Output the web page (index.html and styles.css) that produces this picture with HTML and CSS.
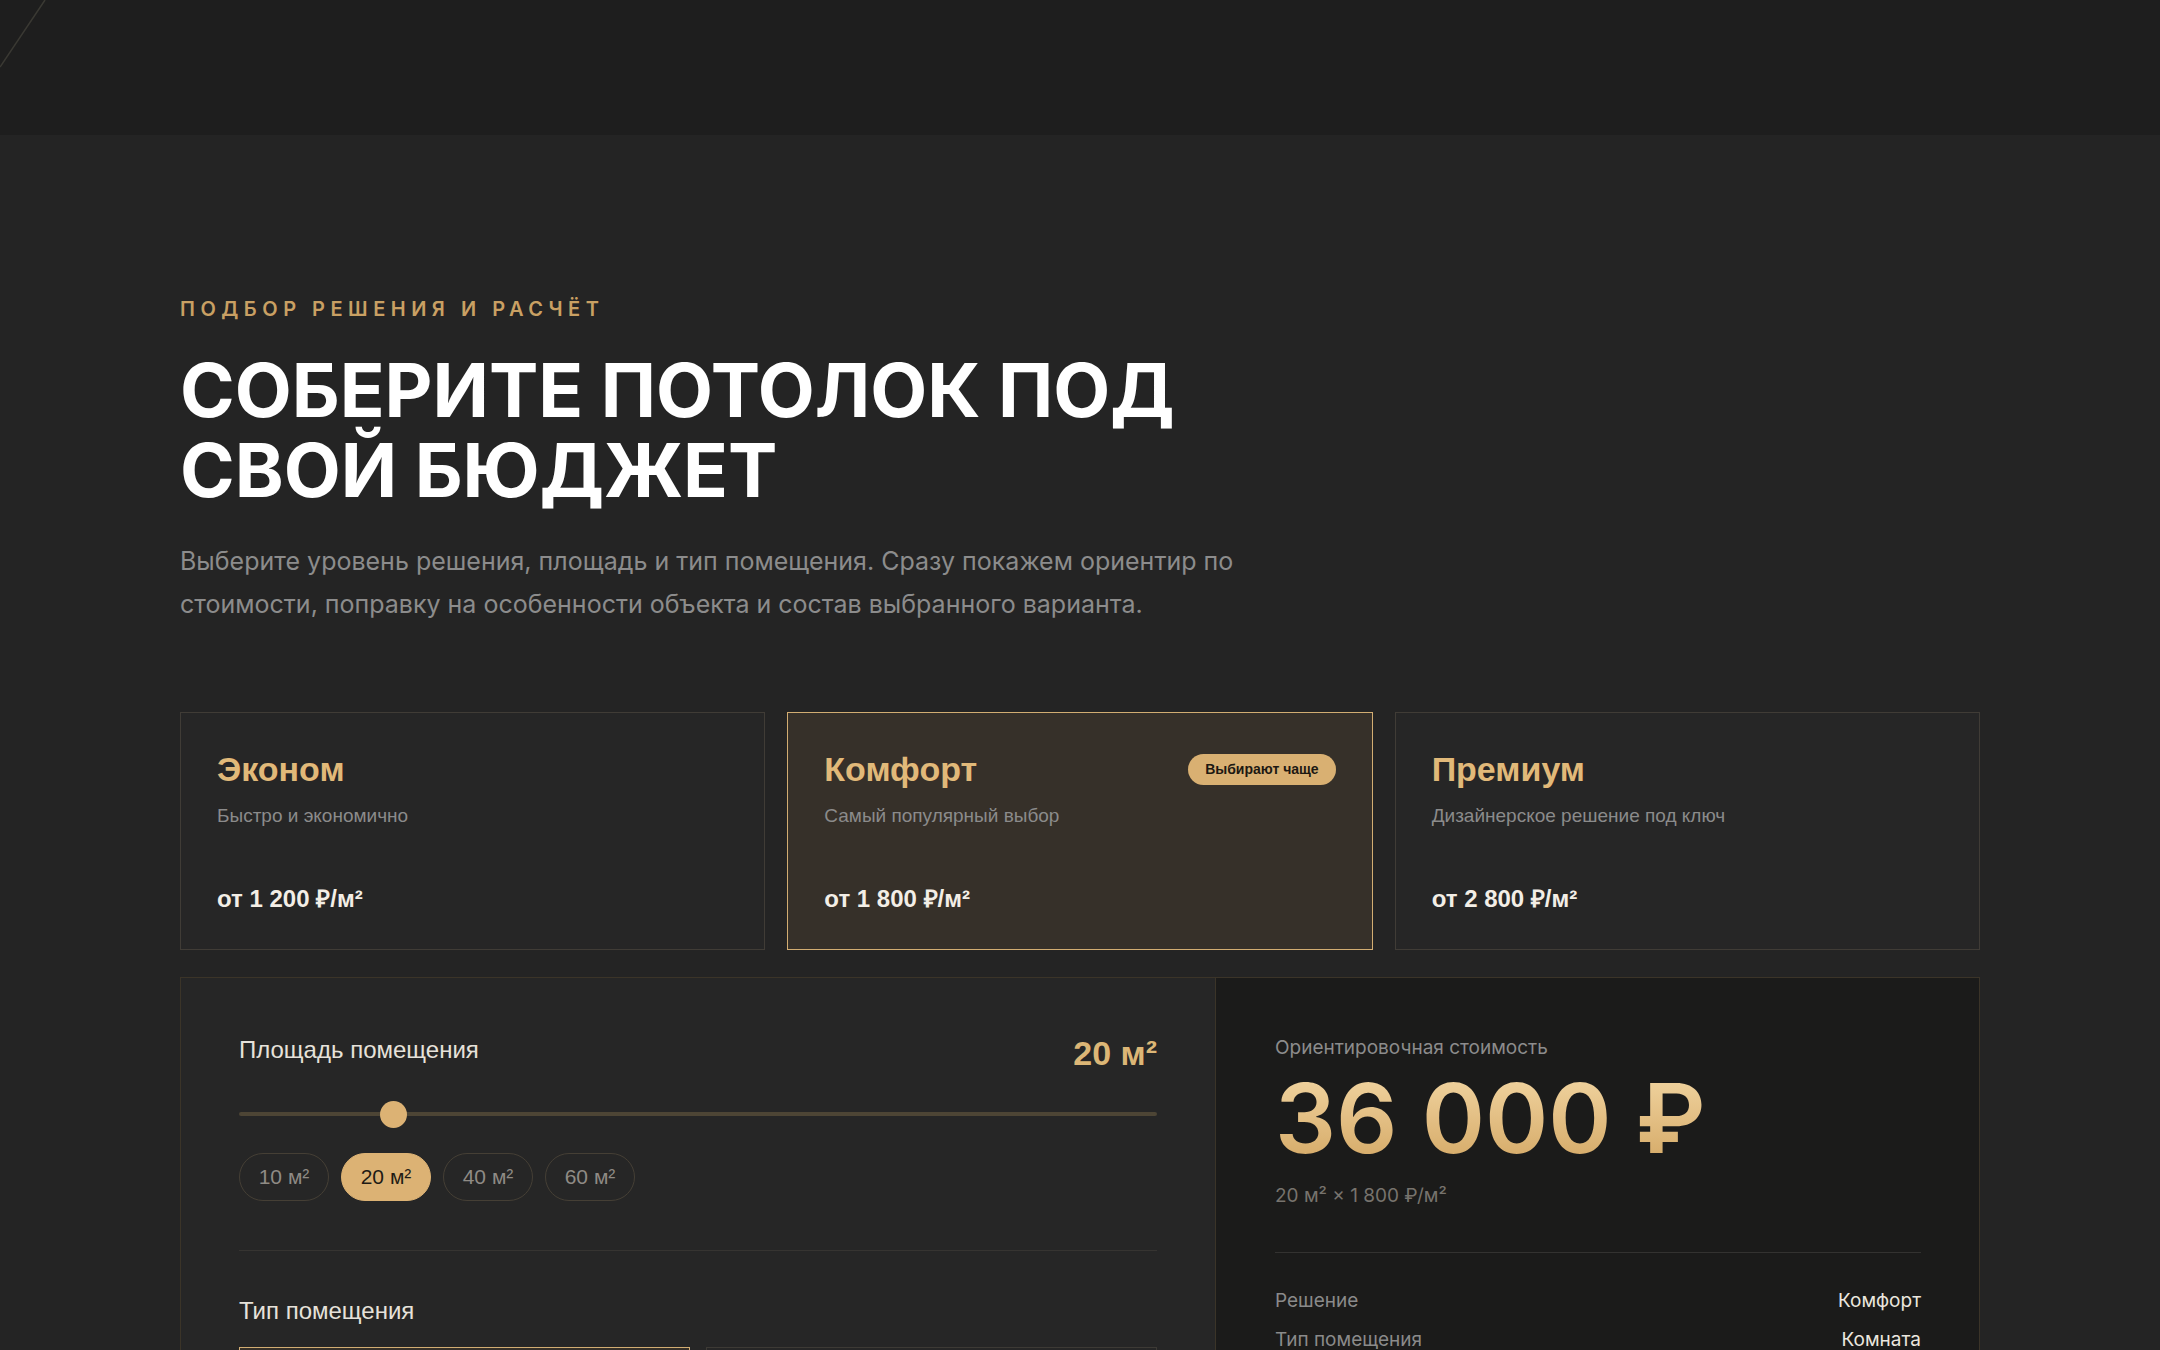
FILE: index.html
```html
<!DOCTYPE html>
<html lang="ru">
<head>
<meta charset="utf-8">
<title>Подбор решения и расчёт</title>
<link rel="stylesheet" href="styles.css">
</head>
<body>
<header class="topbar">
  <svg class="topbar-deco" width="60" height="80" viewBox="0 0 60 80"><line x1="45" y1="0" x2="0" y2="67" stroke="#3a3933" stroke-width="1.5"/></svg>
</header>
<main class="section">
  <p class="eyebrow">Подбор решения и расчёт</p>
  <h1 class="title">Соберите потолок под свой бюджет</h1>
  <p class="lead">Выберите уровень решения, площадь и тип помещения. Сразу покажем ориентир по стоимости, поправку на особенности объекта и состав выбранного варианта.</p>

  <div class="tiers">
    <button class="tier" type="button">
      <span class="tier-head"><span class="tier-name">Эконом</span></span>
      <span class="tier-desc">Быстро и экономично</span>
      <span class="tier-price">от 1 200 ₽/м²</span>
    </button>
    <button class="tier tier-active" type="button">
      <span class="tier-head"><span class="tier-name">Комфорт</span><span class="badge">Выбирают чаще</span></span>
      <span class="tier-desc">Самый популярный выбор</span>
      <span class="tier-price">от 1 800 ₽/м²</span>
    </button>
    <button class="tier" type="button">
      <span class="tier-head"><span class="tier-name">Премиум</span></span>
      <span class="tier-desc">Дизайнерское решение под ключ</span>
      <span class="tier-price">от 2 800 ₽/м²</span>
    </button>
  </div>

  <div class="calc">
    <div class="calc-form">
      <div class="area">
        <div class="area-head">
          <span class="field-label">Площадь помещения</span>
          <span class="area-value">20 м²</span>
        </div>
        <input class="range" type="range" min="5" max="100" value="20" aria-label="Площадь">
        <div class="chips">
          <button class="chip" type="button">10 м²</button>
          <button class="chip chip-active" type="button">20 м²</button>
          <button class="chip" type="button">40 м²</button>
          <button class="chip" type="button">60 м²</button>
        </div>
      </div>
      <div class="rooms">
        <span class="field-label">Тип помещения</span>
        <div class="room-grid">
          <button class="room room-active" type="button">Комната</button>
          <button class="room" type="button">Кухня</button>
          <button class="room" type="button">Санузел</button>
          <button class="room" type="button">Коридор</button>
        </div>
      </div>
    </div>
    <div class="calc-result">
      <p class="result-label">Ориентировочная стоимость</p>
      <p class="result-sum">36 000 ₽</p>
      <p class="result-formula">20 м² × 1 800 ₽/м²</p>
      <dl class="result-rows">
        <div class="result-row"><dt>Решение</dt><dd>Комфорт</dd></div>
        <div class="result-row"><dt>Тип помещения</dt><dd>Комната</dd></div>
        <div class="result-row"><dt>Площадь</dt><dd>20 м²</dd></div>
      </dl>
    </div>
  </div>
</main>
</body>
</html>
```

FILE: styles.css
```css
* { box-sizing: border-box; }

html, body {
  margin: 0;
  background: #242424;
  font-family: Inter, "Noto Sans", sans-serif;
}

.topbar {
  position: relative;
  height: 135px;
  background: #1e1e1e;
  overflow: hidden;
}

.topbar-deco {
  position: absolute;
  left: 0;
  top: 0;
}

.section {
  padding: 162px 180px 80px;
}

.eyebrow {
  margin: 0;
  font-size: 20px;
  line-height: 24px;
  font-weight: 600;
  letter-spacing: 0.275em;
  text-transform: uppercase;
  color: #c9a063;
}

.title {
  margin: 29px 0 0;
  max-width: 1120px;
  font-size: 74px;
  line-height: 80px;
  font-weight: 700;
  text-transform: uppercase;
  color: #ffffff;
}

.lead {
  margin: 30px 0 0;
  max-width: 1100px;
  font-size: 25px;
  line-height: 42.7px;
  font-weight: 400;
  color: #8c8c8c;
}

.tiers {
  margin-top: 87px;
  display: grid;
  grid-template-columns: repeat(3, 1fr);
  gap: 22px;
}

.tier {
  display: flex;
  flex-direction: column;
  align-items: stretch;
  min-height: 238px;
  padding: 36px;
  margin: 0;
  text-align: left;
  font-family: "Liberation Sans", Arial, sans-serif;
  background: #262626;
  border: 1px solid #403c36;
  border-radius: 0;
  cursor: pointer;
}

.tier-active {
  background: #363029;
  border-color: #d2ad72;
}

.tier-head {
  display: flex;
  align-items: center;
  justify-content: space-between;
}

.tier-name {
  font-size: 34px;
  line-height: 1.2;
  font-weight: 700;
  color: #e1b979;
}

.badge {
  padding: 7px 17px;
  border-radius: 999px;
  background: #d9b072;
  color: #1d1912;
  font-size: 14px;
  line-height: 17px;
  font-weight: 700;
}

.tier-desc {
  margin-top: 13px;
  font-size: 19px;
  line-height: 1.4;
  color: #8b8b8b;
}

.tier-price {
  margin-top: auto;
  font-size: 24px;
  line-height: 1.2;
  font-weight: 700;
  color: #f3eee6;
}

.calc {
  margin-top: 27px;
  display: grid;
  grid-template-columns: 1034px 1fr;
  border: 1px solid #3b3428;
}

.calc-form {
  background: #262626;
  padding: 58px;
  font-family: "Liberation Sans", Arial, sans-serif;
}

.area {
  padding-bottom: 49px;
  border-bottom: 1px solid #363431;
}

.area-head {
  display: flex;
  align-items: flex-start;
  justify-content: space-between;
}

.field-label {
  display: block;
  font-size: 24px;
  line-height: 1.2;
  color: #e6e2da;
}

.area-value {
  font-size: 34px;
  line-height: 1;
  font-weight: 700;
  color: #dcb676;
}

.range {
  -webkit-appearance: none;
  appearance: none;
  display: block;
  width: 100%;
  height: 28px;
  margin: 30px 0 0;
  background: transparent;
}

.range::-webkit-slider-runnable-track {
  height: 4px;
  border-radius: 2px;
  background: #4d4535;
}

.range::-webkit-slider-thumb {
  -webkit-appearance: none;
  appearance: none;
  width: 27px;
  height: 27px;
  margin-top: -11.5px;
  border: none;
  border-radius: 50%;
  background: #dcb274;
}

.chips {
  margin-top: 25px;
  display: flex;
  gap: 12px;
}

.chip {
  height: 48px;
  width: 90px;
  padding: 0;
  border: 1px solid #453f35;
  border-radius: 999px;
  background: transparent;
  font-family: "Liberation Sans", Arial, sans-serif;
  font-size: 21px;
  color: #8f8b85;
  cursor: pointer;
}

.chip-active {
  background: #dcb274;
  border-color: #dcb274;
  color: #1f1b15;
}

.rooms {
  padding-top: 46px;
}

.room-grid {
  margin-top: 21px;
  display: grid;
  grid-template-columns: 1fr 1fr;
  gap: 16px;
}

.room {
  height: 84px;
  padding: 0 24px;
  text-align: left;
  border: 1px solid #3d3a35;
  background: #262626;
  font-family: "Liberation Sans", Arial, sans-serif;
  font-size: 21px;
  color: #d8d4cc;
}

.room-active {
  border-color: #d2ad72;
  background: #363029;
}

.calc-result {
  background: #1b1b1a;
  border-left: 1px solid #3b3428;
  padding: 58px 58px 58px 59px;
}

.result-label {
  margin: 0;
  font-size: 19px;
  line-height: 24px;
  color: #8c8c8c;
}

.result-sum {
  margin: 10px 0 0;
  font-size: 96px;
  line-height: 96px;
  font-weight: 600;
  background: linear-gradient(180deg, #f2d6a3 0%, #d4a865 100%);
  -webkit-background-clip: text;
  background-clip: text;
  color: transparent;
}

.result-formula {
  margin: 18px 0 0;
  font-size: 19px;
  line-height: 24px;
  color: #77736d;
}

.result-rows {
  margin: 44px 0 0;
  padding-top: 36px;
  border-top: 1px solid #333230;
  display: flex;
  flex-direction: column;
  gap: 15px;
}

.result-row {
  display: flex;
  justify-content: space-between;
  font-size: 19px;
  line-height: 24px;
}

.result-row dt {
  color: #8a8a8a;
}

.result-row dd {
  margin: 0;
  color: #ebe7df;
}
```
